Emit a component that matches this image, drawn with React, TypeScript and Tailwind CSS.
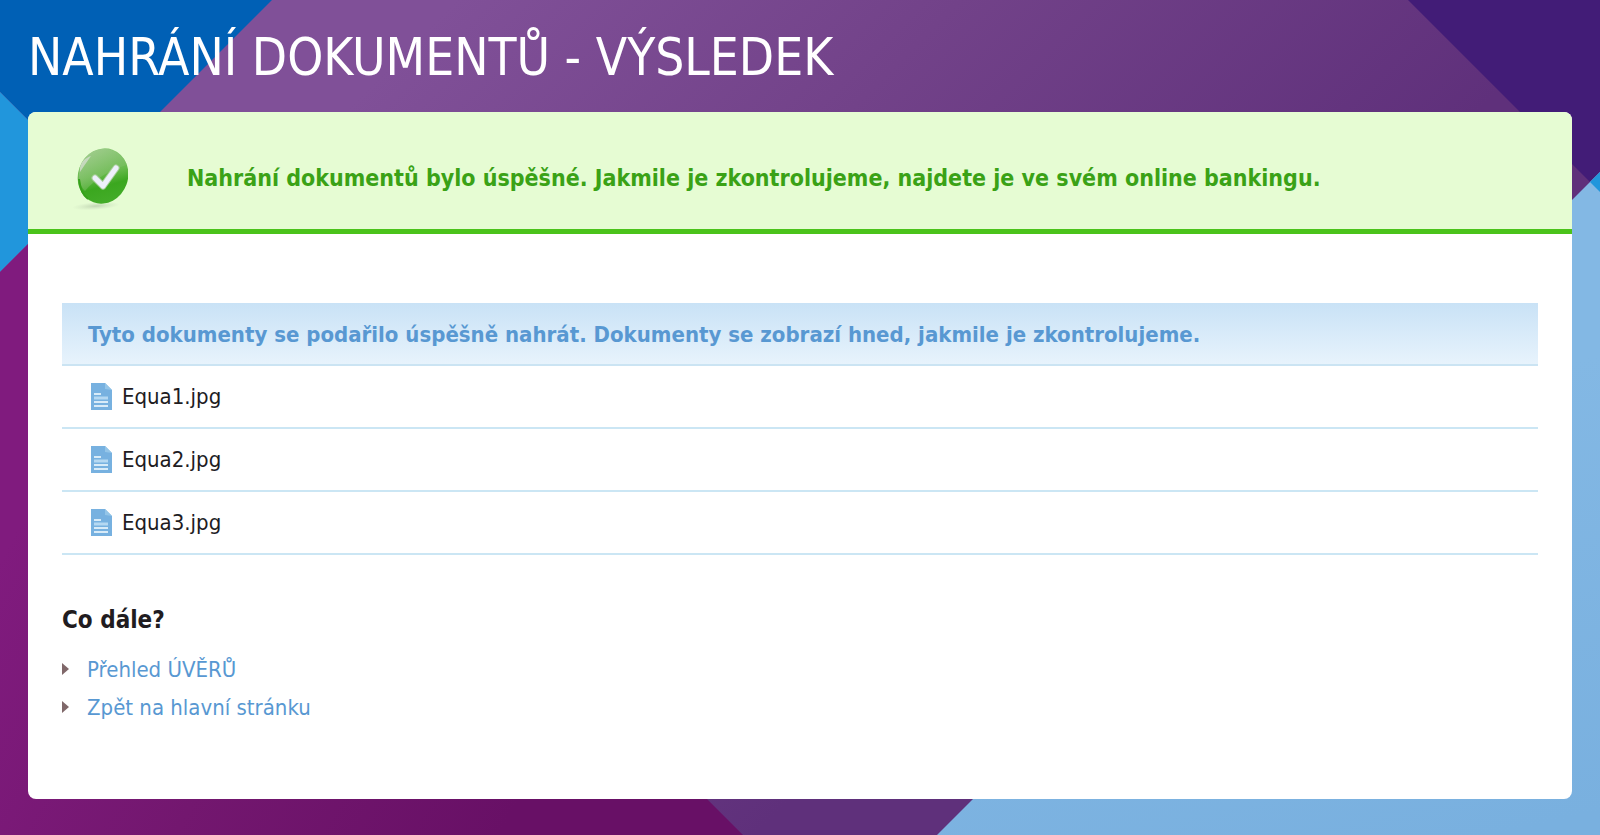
const FILES = ["Equa1.jpg", "Equa2.jpg", "Equa3.jpg"];

const LINKS = ["Přehled ÚVĚRŮ", "Zpět na hlavní stránku"];

function Backdrop() {
  return (
    <svg
      viewBox="0 0 1600 835"
      preserveAspectRatio="none"
      className="absolute inset-0 -z-10 h-full w-full"
      aria-hidden
    >
      <defs>
        <linearGradient id="plum" gradientUnits="userSpaceOnUse" x1="180" y1="150" x2="810" y2="780">
          <stop offset="0.1" stopColor="#805098" />
          <stop offset="0.5" stopColor="#724289" />
          <stop offset="1" stopColor="#5f307b" />
        </linearGradient>
        <linearGradient id="magenta" gradientUnits="userSpaceOnUse" x1="0" y1="560" x2="500" y2="835">
          <stop offset="0" stopColor="#801b7e" />
          <stop offset="0.5" stopColor="#73176f" />
          <stop offset="1" stopColor="#681066" />
        </linearGradient>
        <linearGradient id="sky" gradientUnits="userSpaceOnUse" x1="1400" y1="400" x2="1500" y2="835">
          <stop offset="0" stopColor="#83b8e4" />
          <stop offset="1" stopColor="#79b0df" />
        </linearGradient>
      </defs>
      <rect width="1600" height="835" fill="url(#plum)" />
      <path d="M0 0H272L90 182L0 92Z" fill="#0060b5" />
      <path d="M0 92L90 182L0 272Z" fill="#2196dc" />
      <path d="M0 272L90 182L743 835H0Z" fill="url(#magenta)" />
      <path d="M1408 0H1600V172L1590 182Z" fill="#421c77" />
      <path d="M1600 172V835H937Z" fill="url(#sky)" />
      <path d="M1600 172V192L1590 182Z" fill="#2196dc" />
    </svg>
  );
}

function SuccessIcon() {
  return (
    <svg viewBox="0 0 56 64" className="h-16 w-14 shrink-0" aria-hidden>
      <defs>
        <linearGradient id="ball" x1="0.25" y1="0.1" x2="0.75" y2="0.9">
          <stop offset="0" stopColor="#8cc976" />
          <stop offset="0.45" stopColor="#68ba4c" />
          <stop offset="0.7" stopColor="#3ba71f" />
          <stop offset="1" stopColor="#43ac28" />
        </linearGradient>
        <linearGradient id="gloss" x1="0" y1="0" x2="0.7" y2="1">
          <stop offset="0" stopColor="#a9cf98" stopOpacity="0.9" />
          <stop offset="1" stopColor="#6fba55" stopOpacity="0.3" />
        </linearGradient>
        <radialGradient id="shade">
          <stop offset="0" stopColor="#b0c4a4" stopOpacity="0.7" />
          <stop offset="1" stopColor="#c4d8b8" stopOpacity="0" />
        </radialGradient>
      </defs>
      <ellipse cx="24" cy="59" rx="24" ry="4" fill="url(#shade)" transform="rotate(-4 24 59)" />
      <ellipse cx="31" cy="29" rx="25" ry="28" fill="url(#ball)" transform="rotate(20 31 29)" />
      <path d="M7 27C7 12 20 2 32 2C43 2 52 9 55 18C39 22 23 32 13 44C9 40 7 34 7 27Z" fill="url(#gloss)" />
      <path d="M8 21C9 15 13 11 19 9L12 19L8 25Z" fill="#dcdfd9" opacity="0.7" />
      <path d="M7 32C8 41 10 48 16 52" fill="none" stroke="#36a11b" strokeWidth="2" />
      <path d="M23 31L31 39L44 21" fill="none" stroke="#a9cf9c" strokeWidth="7" strokeLinecap="round" strokeLinejoin="round" />
      <path d="M23 31L31 39L44 21" fill="none" stroke="#eef0fb" strokeWidth="5" strokeLinecap="round" strokeLinejoin="round" />
    </svg>
  );
}

function FileIcon() {
  return (
    <svg viewBox="0 0 21 27" className="h-[27px] w-[21px] shrink-0" aria-hidden>
      <path d="M0 0H14L21 7V27H0Z" fill="#77b1e0" />
      <path d="M14 0L21 7L14 6Z" fill="#94c5e8" />
      <path d="M3 11H10M3 19H17M3 23H17" stroke="#d8ebf8" strokeWidth="2" />
      <path d="M3 15H17" stroke="#b5d8f2" strokeWidth="3" />
    </svg>
  );
}

export default function App() {
  return (
    <main className="relative isolate min-h-screen px-7 pb-9 font-['DejaVu_Sans_Condensed','DejaVu_Sans',sans-serif] text-[#211c1f]">
      <Backdrop />
      <h1 className="flex h-28 items-center pt-[2px] text-[51px] leading-none text-white">
        NAHRÁNÍ DOKUMENTŮ - VÝSLEDEK
      </h1>

      <div className="overflow-hidden rounded-lg bg-white">
        <div role="status" className="flex h-[122px] items-center gap-[59px] border-b-[5px] border-[#4bc31b] bg-[#e6fcd3] px-11 pt-4">
          <SuccessIcon />
          <p className="text-[23px] font-bold text-[#3aa216]">
            Nahrání dokumentů bylo úspěšné. Jakmile je zkontrolujeme, najdete je ve svém online bankingu.
          </p>
        </div>

        <div className="px-[34px] pt-[69px] pb-[73px]">
          <table className="w-full border-separate border-spacing-0 text-left">
            <thead>
              <tr>
                <th className="h-[63px] border-b-2 border-[#cbe4f3] bg-linear-to-b from-[#c9e2f6] to-[#e7f3fc] px-[26px] pt-[2px] text-[22px] font-bold text-[#5898d2]">
                  Tyto dokumenty se podařilo úspěšně nahrát. Dokumenty se zobrazí hned, jakmile je zkontrolujeme.
                </th>
              </tr>
            </thead>
            <tbody>
              {FILES.map((name) => (
                <tr key={name}>
                  <td className="h-[63px] border-b-2 border-[#cbe6f4] px-[29px] text-[22px]">
                    <span className="flex items-center gap-[10px]">
                      <FileIcon />
                      {name}
                    </span>
                  </td>
                </tr>
              ))}
            </tbody>
          </table>

          <h2 className="mt-[47px] text-[24px] leading-9 font-bold">Co dále?</h2>
          <ul className="mt-3">
            {LINKS.map((label) => (
              <li key={label} className="flex h-[38px] items-center gap-[17px] text-[22px]">
                <svg viewBox="0 0 8 12" className="h-3 w-2 shrink-0" aria-hidden>
                  <path d="M0 0L7 6L0 12Z" fill="#80686a" />
                </svg>
                <a href="#" className="text-[#5898d2] hover:underline">
                  {label}
                </a>
              </li>
            ))}
          </ul>
        </div>
      </div>
    </main>
  );
}
